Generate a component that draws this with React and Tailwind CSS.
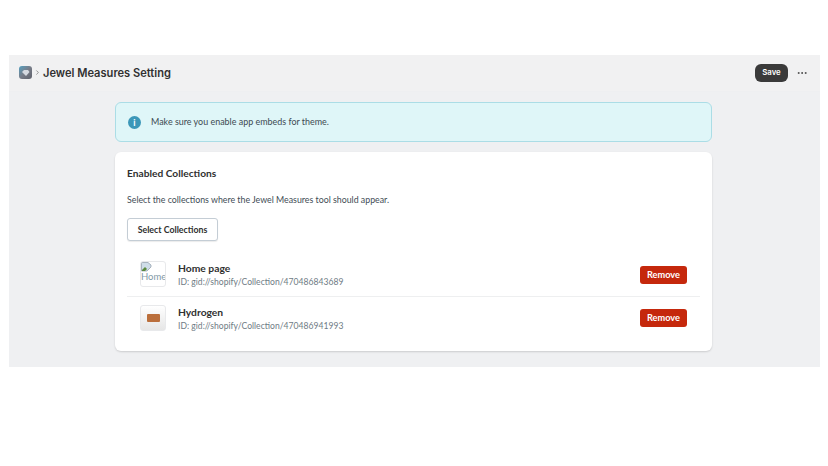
import { MoreHorizontal, ChevronRight } from "lucide-react";

function AppIcon() {
  return (
    <div className="w-[13px] h-[13px] rounded-[3px] bg-gradient-to-br from-[#4f9fc0] via-[#777c88] to-[#5f616b] flex items-center justify-center">
      <svg width="9" height="8" viewBox="0 0 9 8">
        <path d="M1 3 L3 1 H7 L8.5 3 L5 7 Z" fill="#d5d9e0" />
      </svg>
    </div>
  );
}

function BrokenThumb() {
  return (
    <div className="w-[26px] h-[26px] rounded-[3px] border border-[#e8e9eb] bg-white overflow-hidden flex flex-col">
      <svg width="11" height="10" viewBox="0 0 11 10" className="shrink-0">
        <path d="M0.5 0.5 H7 L10 3 V5 L6 9 H0.5 Z" fill="#cfdde8" stroke="#8d9aa6" strokeWidth="0.7" />
        <path d="M1 8 L4 5 L6 7 L4 9 H1 Z" fill="#5b8a3c" />
      </svg>
      <span className="text-[9.5px] leading-[9px] text-[#7f9aa8]">Home</span>
    </div>
  );
}

function ProductThumb() {
  return (
    <div className="w-[26px] h-[26px] rounded-[3px] border border-[#e8e9eb] bg-gradient-to-b from-white to-[#e6e6e6] flex items-center justify-center">
      <div className="w-[13px] h-[8px] bg-[#bb6f3c] rounded-[1px] mt-px" />
    </div>
  );
}

function CollectionRow({ thumb, title, id, border }) {
  return (
    <div className={`flex items-center justify-between h-[43px] pl-[13px] pr-[13px] ${border ? "border-b border-[#eeeff0]" : ""}`}>
      <div className="flex items-center gap-[12px] -mt-[2px]">
        {thumb}
        <div className="flex flex-col pt-[2px]">
          <span className="text-[10.3px] leading-[14px] font-bold text-[#303030]">{title}</span>
          <span className="text-[8.6px] leading-[14px] text-[#6f7c85]">ID: {id}</span>
        </div>
      </div>
      <button className="w-[47px] h-[18px] -mt-px rounded-[3px] bg-[#c5280c] text-white text-[9.2px] font-bold">
        Remove
      </button>
    </div>
  );
}

export default function App() {
  return (
    <div className="w-[828px] h-[466px] bg-white pt-[55px] pl-[9px] font-['Lato',sans-serif]">
      <div className="w-[811px] h-[312px] bg-[#eff0f2] flex flex-col">
        <header className="h-[37px] flex items-center justify-between pl-[10px] pr-[12px] border-b border-[#eeeff1] bg-[#f1f1f2] font-['Inter',sans-serif]">
          <div className="flex items-center">
            <AppIcon />
            <ChevronRight size={7} className="text-[#555555] mx-[2px]" />
            <h1 className="text-[11.1px] font-semibold text-[#303030]">Jewel Measures Setting</h1>
          </div>
          <div className="flex items-center gap-[8px]">
            <button className="w-[33px] h-[18px] rounded-[6px] bg-[#3a3a3a] text-white text-[7.8px] font-semibold">
              Save
            </button>
            <MoreHorizontal size={12} className="text-[#4a4a4a]" />
          </div>
        </header>

        <main className="w-[597px] ml-[106px] mt-[10px] flex flex-col gap-[10px]">
          <div className="h-[40px] rounded-[6px] bg-[#dff6f8] border border-[#abdde6] flex items-center pl-[12px] gap-[10px]">
            <div className="w-[13px] h-[13px] rounded-full bg-[#3c97b8] flex items-center justify-center text-white text-[9px] font-bold leading-none">
              i
            </div>
            <span className="text-[8.95px] text-[#3d4a52]">Make sure you enable app embeds for theme.</span>
          </div>

          <section className="h-[199px] rounded-[6px] bg-white shadow-[0_1px_2px_rgba(0,0,0,0.15)] px-[12px] pt-[14px]">
            <h2 className="text-[10.2px] leading-[14px] font-bold text-[#303030]">Enabled Collections</h2>
            <p className="mt-[13px] text-[8.8px] leading-[14px] text-[#414c55]">
              Select the collections where the Jewel Measures tool should appear.
            </p>
            <button className="mt-[11px] w-[91px] h-[23px] rounded-[3px] border border-[#c4cdd5] bg-white text-[8.8px] font-bold text-[#303030] shadow-[0_1px_1px_rgba(0,0,0,0.08)]">
              Select Collections
            </button>
            <div className="mt-[13px]">
              <CollectionRow
                thumb={<BrokenThumb />}
                title="Home page"
                id="gid://shopify/Collection/470486843689"
                border
              />
              <CollectionRow
                thumb={<ProductThumb />}
                title="Hydrogen"
                id="gid://shopify/Collection/470486941993"
              />
            </div>
          </section>
        </main>
      </div>
    </div>
  );
}
